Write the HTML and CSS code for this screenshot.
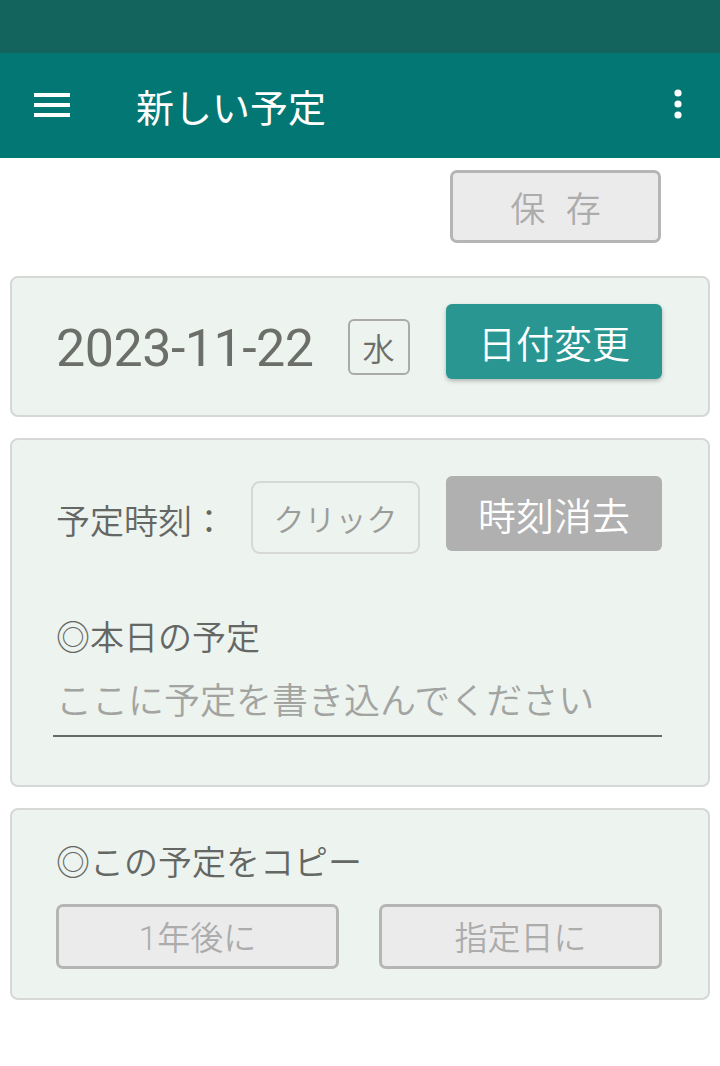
FILE: index.html
```html
<!DOCTYPE HTML>
<html lang="ja">
<head>
    <meta charset="UTF-8">
    <meta name="viewport" content="width=device-width, initial-scale=1.0">
    <title>新しい予定</title>
    <link rel="stylesheet" href="styles.css">
</head>
<body>
    <div class="status-bar"></div>

    <div class="app-bar">
        <div class="menu-icon">
            <svg width="36" height="24" viewBox="0 0 36 24">
                <rect x="0" y="0" width="36" height="4" fill="#fff" />
                <rect x="0" y="10" width="36" height="4" fill="#fff" />
                <rect x="0" y="20" width="36" height="4" fill="#fff" />
            </svg>
        </div>
        <h1>新しい予定</h1>
        <div class="more-icon">
            <svg width="8" height="30" viewBox="0 0 8 30">
                <circle cx="4" cy="4" r="3.6" fill="#fff" />
                <circle cx="4" cy="15" r="3.6" fill="#fff" />
                <circle cx="4" cy="26" r="3.6" fill="#fff" />
            </svg>
        </div>
    </div>

    <div class="save-row">
        <button class="btn-flat save-btn">保 存</button>
    </div>

    <div class="card date-card">
        <span class="date-text">2023-11-22</span>
        <span class="weekday">水</span>
        <button class="btn-solid btn-teal">日付変更</button>
    </div>

    <div class="card plan-card">
        <div class="time-row">
            <span class="label">予定時刻：</span>
            <span class="time-box">クリック</span>
            <button class="btn-solid btn-gray">時刻消去</button>
        </div>
        <div class="section-title">◎本日の予定</div>
        <div class="plan-input">ここに予定を書き込んでください</div>
    </div>

    <div class="card copy-card">
        <div class="section-title">◎この予定をコピー</div>
        <div class="copy-row">
            <button class="btn-flat copy-btn">1年後に</button>
            <button class="btn-flat copy-btn">指定日に</button>
        </div>
    </div>
</body>
</html>
```

FILE: styles.css
```css
:root {
    --primary: #037773;
    --primary-dark: #12645c;
    --accent: #2a9692;
    --card-bg: #edf3ee;
    --card-border: #d6d8d6;
    --text-color: #646763;
    --hint-color: #9a9c99;
    --flat-bg: #ebebeb;
    --flat-border: #b5b5b5;
    --flat-text: #acacac;
}

body {
    font-family: Roboto, "Noto Sans CJK JP", sans-serif;
    font-weight: 350;
    margin: 0;
    background-color: #ffffff;
    color: var(--text-color);
}

button {
    font-family: Roboto, "Noto Sans CJK JP", sans-serif;
    font-weight: 350;
    cursor: pointer;
}

.status-bar {
    height: 53px;
    background-color: var(--primary-dark);
}

.app-bar {
    height: 105px;
    background-color: var(--primary);
    display: flex;
    align-items: center;
    padding: 0 38px 0 34px;
    box-sizing: border-box;
}

.menu-icon {
    display: flex;
    margin-top: -2px;
}

.app-bar h1 {
    flex: 1;
    margin: 0 0 0 66px;
    font-size: 38px;
    font-weight: 400;
    color: #ffffff;
}

.more-icon {
    display: flex;
    margin-top: -4px;
}

.save-row {
    display: flex;
    justify-content: flex-end;
    padding: 12px 59px 0 0;
    margin-bottom: 33px;
}

.btn-flat {
    background-color: var(--flat-bg);
    border: 3px solid var(--flat-border);
    border-radius: 7px;
    color: var(--flat-text);
    padding: 0;
}

.save-btn {
    width: 211px;
    height: 73px;
    font-size: 35px;
    letter-spacing: 6px;
    padding-left: 6px;
}

.card {
    margin: 0 10px 21px;
    background-color: var(--card-bg);
    border: 2px solid var(--card-border);
    border-radius: 8px;
}

.date-card {
    height: 141px;
    box-sizing: border-box;
    display: flex;
    align-items: center;
    padding: 0 46px 10px 44px;
}

.date-text {
    font-size: 52px;
    font-weight: 400;
    color: #6b6e69;
    margin-top: 14px;
    letter-spacing: -0.5px;
}

.weekday {
    width: 58px;
    height: 52px;
    border: 2px solid #aaaaaa;
    border-radius: 6px;
    display: flex;
    align-items: center;
    justify-content: center;
    font-size: 32px;
    margin-left: 34px;
    margin-top: 10px;
    color: #6b6e69;
}

.btn-solid {
    border: none;
    border-radius: 6px;
    color: #ffffff;
    font-size: 38px;
    width: 216px;
    height: 75px;
    padding: 0;
}

.btn-teal {
    margin-left: auto;
    background-color: var(--accent);
    box-shadow: 0 2px 4px rgba(0, 0, 0, 0.25);
}

.btn-gray {
    margin-left: auto;
    background-color: #b0b0b0;
}

.plan-card {
    height: 349px;
    box-sizing: border-box;
    padding: 33px 46px 0 44px;
}

.time-row {
    display: flex;
    align-items: center;
}

.label {
    font-size: 34px;
    width: 195px;
    margin-top: 12px;
}

.time-box {
    width: 165px;
    height: 69px;
    border: 2px solid var(--card-border);
    border-radius: 9px;
    display: flex;
    align-items: center;
    justify-content: center;
    font-size: 31px;
    color: var(--hint-color);
    margin-top: 8px;
}

.section-title {
    font-size: 34px;
    line-height: 1.2;
}

.plan-card .section-title {
    margin-top: 64px;
}

.plan-input {
    font-size: 36px;
    color: #a2a4a1;
    line-height: 1.3;
    margin: 20px 0 0 -3px;
    padding: 0 0 9px 3px;
    border-bottom: 2px solid #676a66;
}

.copy-card {
    height: 192px;
    box-sizing: border-box;
    padding: 33px 46px 0 44px;
}

.copy-row {
    display: flex;
    gap: 40px;
    margin-top: 20px;
}

.copy-btn {
    width: 283px;
    height: 65px;
    font-size: 33px;
}
```
